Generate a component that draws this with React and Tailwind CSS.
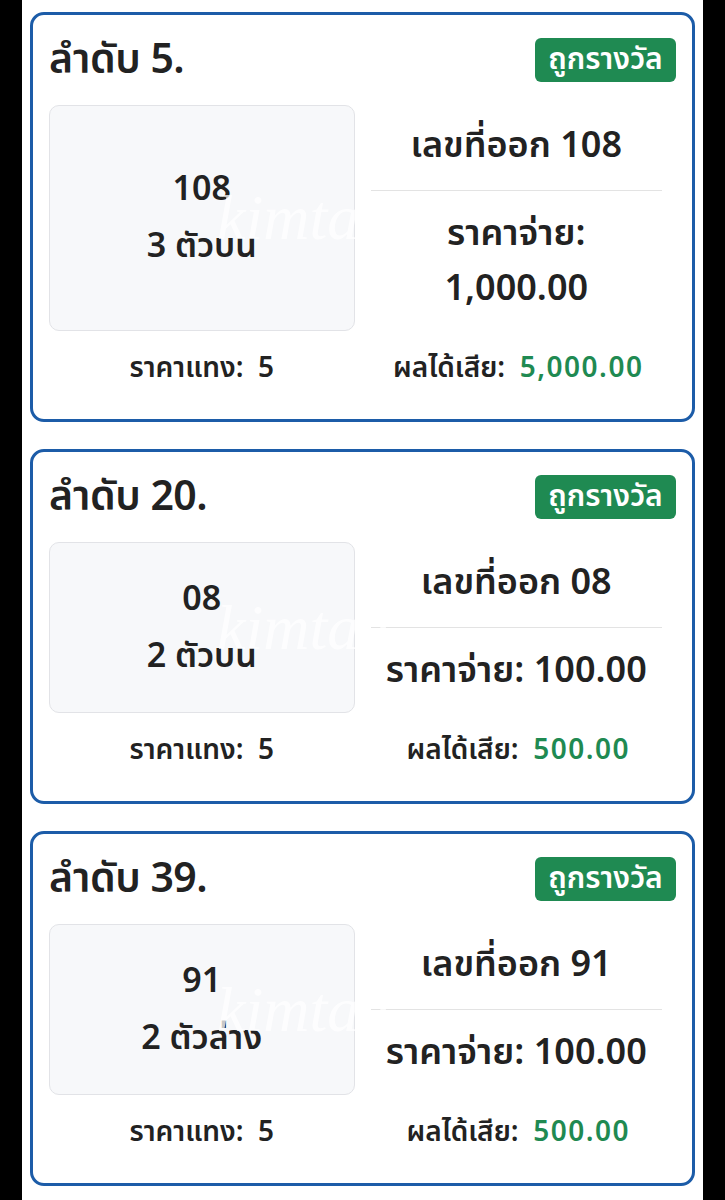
import React from "react";

const font = { fontFamily: '"Noto Sans Thai", "Noto Sans", "DejaVu Sans", sans-serif' };

const items = [
  { no: "5", num: "108", type: "3 ตัวบน", out: "108", payLines: ["ราคาจ่าย:", "1,000.00"], bet: "5", result: "5,000.00" },
  { no: "20", num: "08", type: "2 ตัวบน", out: "08", payLines: ["ราคาจ่าย: 100.00"], bet: "5", result: "500.00" },
  { no: "39", num: "91", type: "2 ตัวล่าง", out: "91", payLines: ["ราคาจ่าย: 100.00"], bet: "5", result: "500.00" },
];

function Card({ it }) {
  return (
    <div className="relative rounded-[14px] border-[3px] border-[#1c5ca8] bg-white px-4 pt-[23px] pb-[30px] text-[#222222]">
      <div className="flex h-[44px] items-center justify-between">
        <div className="text-[41px] font-semibold leading-none tracking-[-0.5px]">ลำดับ {it.no}.</div>
        <div className="flex h-[44px] w-[141px] items-center justify-center rounded-md bg-[#1f8a52] text-[30px] font-semibold leading-none text-white">
          ถูกรางวัล
        </div>
      </div>
      <div className="relative mt-[23px] grid grid-cols-2 gap-4">
        <div className="flex flex-col items-center justify-center rounded-[10px] border border-[#e2e3e7] bg-[#f7f8fa]">
          <div className="text-[34px] font-semibold leading-[57px]">{it.num}</div>
          <div className="text-[34px] font-semibold leading-[57px]">{it.type}</div>
        </div>
        <div className="flex flex-col justify-center py-[14px] pr-[14px] text-center">
          <div className="whitespace-nowrap text-[36px] font-semibold leading-[55px]">เลขที่ออก {it.out}</div>
          <div className="my-4 h-px bg-[#e3e3e3]" />
          {it.payLines.map((l, i) => (
            <div key={i} className="whitespace-nowrap text-[36px] font-semibold leading-[55px]">{l}</div>
          ))}
        </div>
        <div
          className="pointer-events-none absolute left-[168px] top-1/2 -translate-y-1/2 text-[64px] italic leading-none text-white/75"
          style={{ fontFamily: '"Liberation Serif", serif' }}
        >
          kimtae
        </div>
      </div>
      <div className="mt-[18px] grid grid-cols-2 gap-4 text-[28px] font-semibold leading-[40px]">
        <div className="whitespace-nowrap text-center">ราคาแทง:&nbsp; {it.bet}</div>
        <div className="whitespace-nowrap pr-[10px] text-center">
          ผลได้เสีย:&nbsp; <span className="tracking-[1.5px] text-[#1f8a52]">{it.result}</span>
        </div>
      </div>
    </div>
  );
}

export default function App() {
  return (
    <div className="min-h-[1200px] bg-black" style={font}>
      <div className="mx-[22px] flex min-h-[1200px] flex-col gap-[27px] bg-white px-2 pt-3">
        {items.map((it) => (
          <Card key={it.no} it={it} />
        ))}
      </div>
    </div>
  );
}
